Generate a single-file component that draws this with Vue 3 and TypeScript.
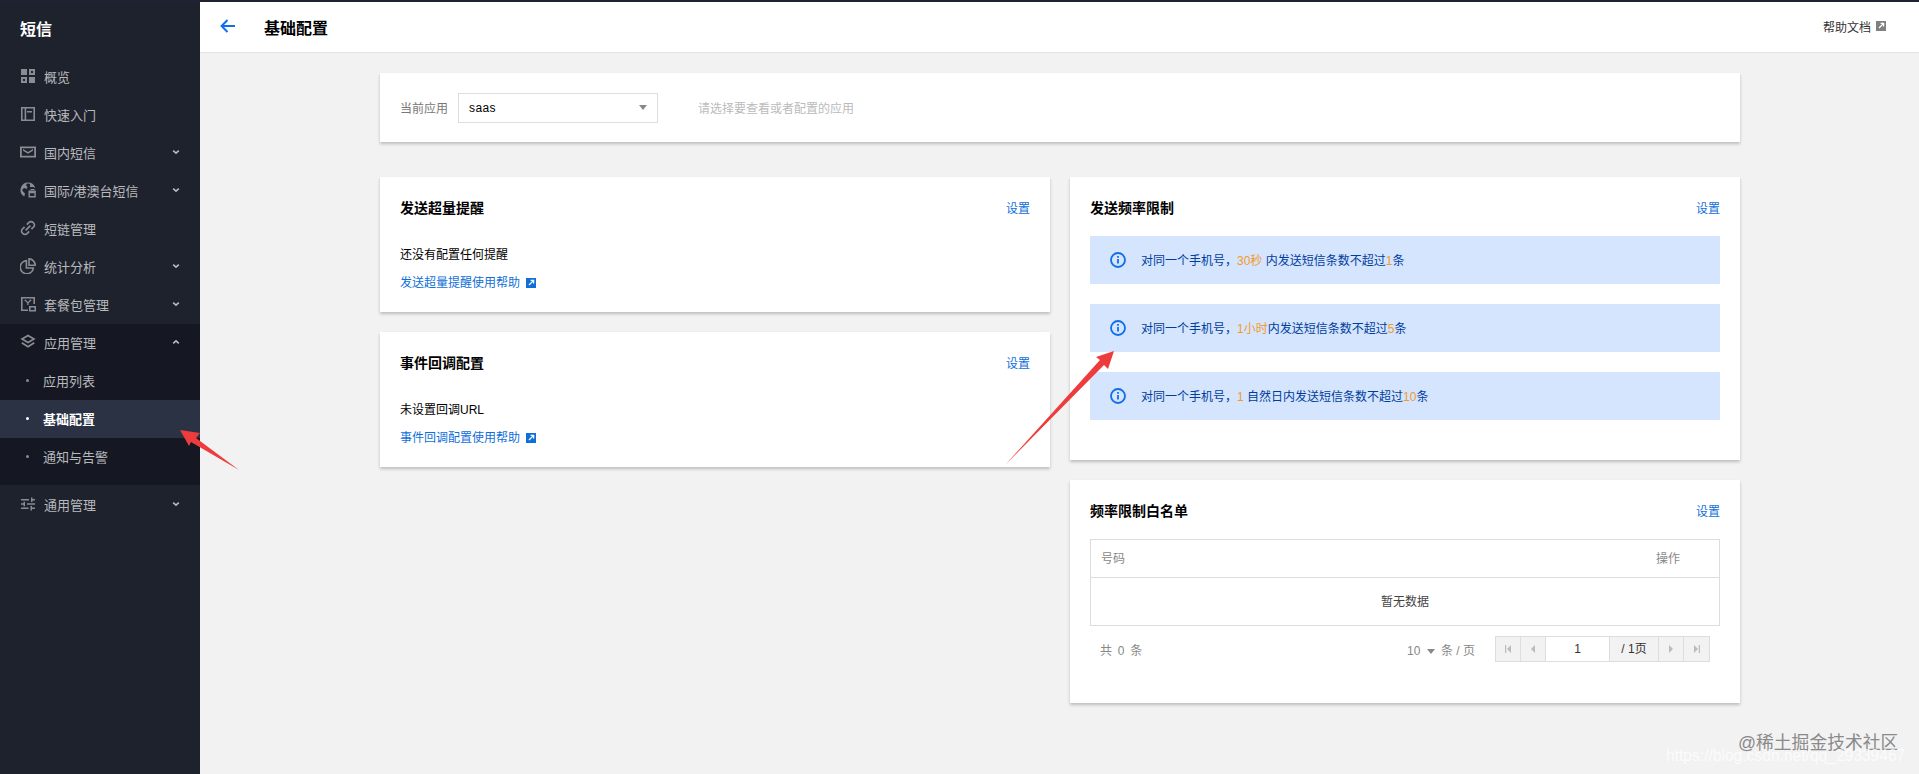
<template>
  <div class="page">
    <div class="layout">
      <aside class="sidebar">
        <div class="brand">短信</div>
        <template v-for="group in menu" :key="group.label">
          <div class="group" :class="{ open: group.children }">
            <div class="item">
              <svg class="icon" viewBox="0 0 16 16" v-html="icons[group.icon]"></svg>
              <span>{{ group.label }}</span>
              <svg v-if="group.arrow" class="chevron" viewBox="0 0 8 8" :class="{ up: group.children }">
                <path d="M1.2 2.6 4 5.2l2.8-2.6" />
              </svg>
            </div>
            <div
              v-for="child in group.children"
              :key="child"
              class="sub"
              :class="{ active: child === '基础配置' }"
            >
              <i class="dot"></i>{{ child }}
            </div>
          </div>
        </template>
      </aside>

      <div class="right">
        <header class="topbar">
          <svg class="back" viewBox="0 0 16 14">
            <path d="M7.5 1 1.6 7l5.9 6M2 7h13" />
          </svg>
          <h1>基础配置</h1>
          <a class="help">帮助文档
            <svg class="ext" viewBox="0 0 10 10"><rect width="10" height="10" /><path d="M3 7 7.4 2.6M4.6 2.4h3v3" /></svg>
          </a>
        </header>

        <main class="content">
          <section class="card app-card">
            <span class="app-label">当前应用</span>
            <div class="select">
              <span>saas</span>
              <i class="caret"></i>
            </div>
            <span class="app-hint">请选择要查看或者配置的应用</span>
          </section>

          <div class="columns">
            <div class="column">
              <section v-for="c in infoCards" :key="c.title" class="card panel info">
                <div class="panel-head">
                  <h2>{{ c.title }}</h2>
                  <a class="link">设置</a>
                </div>
                <p class="info-text">{{ c.text }}</p>
                <a class="link help-link">{{ c.link }}
                  <svg class="ext" viewBox="0 0 10 10"><rect width="10" height="10" /><path d="M3 7 7.4 2.6M4.6 2.4h3v3" /></svg>
                </a>
              </section>
            </div>

            <div class="column">
              <section class="card panel rate">
                <div class="panel-head">
                  <h2>发送频率限制</h2>
                  <a class="link">设置</a>
                </div>
                <div v-for="(r, i) in rates" :key="i" class="alert">
                  <svg class="alert-icon" viewBox="0 0 16 16">
                    <circle cx="8" cy="8" r="7" />
                    <path d="M8 7v4.6M8 4v1.8" />
                  </svg>
                  <span>对同一个手机号，<b>{{ r.period }}</b>{{ r.middle }}<b>{{ r.limit }}</b>条</span>
                </div>
              </section>

              <section class="card panel white">
                <div class="panel-head">
                  <h2>频率限制白名单</h2>
                  <a class="link">设置</a>
                </div>
                <div class="table">
                  <div class="table-head">
                    <span>号码</span>
                    <span class="op">操作</span>
                  </div>
                  <div class="table-empty">暂无数据</div>
                </div>
                <div class="pager">
                  <span class="total">共 0 条</span>
                  <span class="size">10 <i class="caret"></i> 条 / 页</span>
                  <div class="pages">
                    <button><svg viewBox="0 0 8 10"><path d="M1 1h1.2v8H1zM7 1v8L3 5z" /></svg></button>
                    <button><svg viewBox="0 0 8 10"><path d="M6 1v8L2 5z" /></svg></button>
                    <div class="page-input">1</div>
                    <div class="page-count">/ 1页</div>
                    <button><svg viewBox="0 0 8 10"><path d="M2 1v8l4-4z" /></svg></button>
                    <button><svg viewBox="0 0 8 10"><path d="M7 1H5.8v8H7zM1 1v8l4-4z" /></svg></button>
                  </div>
                </div>
              </section>
            </div>
          </div>
        </main>
      </div>
    </div>

    <!-- annotations on top of the screenshot -->
    <svg class="marks" viewBox="0 0 1919 774">
      <path d="M180 430 200 433 196 438 239 470 191 442 189 446z" />
      <path d="M1114 351 1108 369 1104 365 1006 464 1100 360 1096 357z" />
    </svg>
    <div class="watermark">@稀土掘金技术社区</div>
    <div class="watermark-url">https://blog.csdn.net/qq_29339467</div>
  </div>
</template>

<script setup lang="ts">
interface MenuGroup {
  label: string;
  icon: string;
  arrow?: boolean;
  children?: string[];
}

const menu: MenuGroup[] = [
  { label: '概览', icon: 'overview' },
  { label: '快速入门', icon: 'start' },
  { label: '国内短信', icon: 'mail', arrow: true },
  { label: '国际/港澳台短信', icon: 'globe', arrow: true },
  { label: '短链管理', icon: 'chain' },
  { label: '统计分析', icon: 'pie', arrow: true },
  { label: '套餐包管理', icon: 'pack', arrow: true },
  { label: '应用管理', icon: 'layers', arrow: true, children: ['应用列表', '基础配置', '通知与告警'] },
  { label: '通用管理', icon: 'sliders', arrow: true },
];

const icons: Record<string, string> = {
  overview:
    '<path fill="currentColor" fill-rule="evenodd" d="M1 1h6v6H1zM9 1h6v6H9zm2 2v2h2V3zM1 9h6v6H1zm2 2v2h2v-2zM9 9h6v6H9z"/>',
  start:
    '<path fill="currentColor" fill-rule="evenodd" d="M1 1h14v14H1zm1.6 1.6v10.8h2V2.6zm3.6 0v10.8h7.2V2.6zM7 5h5v1.5H7z"/>',
  mail:
    '<path fill="currentColor" fill-rule="evenodd" d="M0 2.5h16v11H0zM1.8 4.2v7.6h12.4V4.2zM3 5l5 3 5-3v1.7L8 9.8 3 6.7z"/>',
  globe:
    '<path fill="currentColor" d="M8 .5a7.5 7.5 0 0 0-3.7 14l.7-3-2.5-2.5V7l2-1 2 1 1-1.5L6 3l1-1.4 3 .2V5h3.5l1.8 1.2A7.5 7.5 0 0 0 8 .5z"/><path fill="currentColor" fill-rule="evenodd" d="M8.5 8.5h7.3v7H8.5zm1.4 2.8v2.8h4.5v-2.8zM10.5 7h4v1h-4z"/>',
  chain:
    '<path fill="none" stroke="currentColor" stroke-width="1.7" d="M6.8 4.6 9 2.4a2.8 2.8 0 0 1 4 0l.6.6a2.8 2.8 0 0 1 0 4L11.4 9.2M9.2 11.4 7 13.6a2.8 2.8 0 0 1-4 0l-.6-.6a2.8 2.8 0 0 1 0-4l2.2-2.2M5.6 10.4l4.8-4.8"/>',
  pie:
    '<path fill="none" stroke="currentColor" stroke-width="1.6" d="M6.4 2.6a6.6 6.6 0 1 0 7 7.4H6.4z"/><path fill="none" stroke="currentColor" stroke-width="1.6" d="M9 .9a6.5 6.5 0 0 1 6.2 6.4H9z"/>',
  pack:
    '<path fill="currentColor" fill-rule="evenodd" d="M1 1h14v7h-1.6V2.6H2.6v10.8H8V15H1zM4.2 4.2l1-.9 2.7 2.6 2.7-2.6 1 .9-3 2.9V9H7.2V7zM9 10h7v5.5H9zm1.6 1.6v2.3h3.8v-2.3z"/>',
  layers:
    '<path fill="none" stroke="currentColor" stroke-width="1.7" d="M8 1.4 14 5 8 8.6 2 5z"/><path fill="none" stroke="currentColor" stroke-width="1.7" d="m1.8 8.8 6.2 4 6.2-4"/>',
  sliders:
    '<path fill="currentColor" d="M1 3h8v1.5H1zM11 1.5h1.5V3H15v1.5h-2.5V6H11zM1 7.3h2.5V5.8H5v4.4H3.5V8.8H1zM7 7.3h8v1.5H7zM1 11.6h7.5v1.5H1zM10.5 10H12v1.6h3v1.5h-3v1.5h-1.5z"/>',
};

const infoCards = [
  { title: '发送超量提醒', text: '还没有配置任何提醒', link: '发送超量提醒使用帮助' },
  { title: '事件回调配置', text: '未设置回调URL', link: '事件回调配置使用帮助' },
];

const rates = [
  { period: '30秒', middle: ' 内发送短信条数不超过', limit: '1' },
  { period: '1小时', middle: '内发送短信条数不超过', limit: '5' },
  { period: '1 ', middle: '自然日内发送短信条数不超过', limit: '10' },
];
</script>

<style>
html,
body {
  margin: 0;
  background: #f2f2f2;
}
</style>

<style scoped>
.page {
  position: relative;
  height: 774px;
  overflow: hidden;
  border-top: 2px solid #1f2233;
  box-sizing: border-box;
  font-family: "Liberation Sans", "Noto Sans CJK SC", sans-serif;
  font-size: 12px;
  color: #000;
}

.layout {
  display: flex;
  height: 100%;
}

.sidebar {
  width: 200px;
  flex: none;
  background: #1e222d;
  color: #b8babe;
  font-size: 13px;
}

.brand {
  height: 56px;
  padding-left: 20px;
  line-height: 55px;
  font-size: 16px;
  font-weight: 700;
  color: #fff;
}

.item,
.sub {
  display: flex;
  align-items: center;
  height: 38px;
  box-sizing: border-box;
  padding-bottom: 2px;
}

.item {
  padding-left: 20px;
  position: relative;
}

.icon {
  width: 16px;
  height: 16px;
  margin-right: 8px;
  color: #898c93;
}

.chevron {
  position: absolute;
  left: 172px;
  top: 14px;
  width: 8px;
  height: 8px;
  fill: none;
  stroke: #b8babe;
  stroke-width: 1.6;
}

.chevron.up {
  transform: rotate(180deg);
}

.group.open {
  background: #151822;
  padding-bottom: 9px;
  margin-bottom: 1px;
}

.sub {
  padding-left: 26px;
}

.sub.active {
  background: #2a3244;
  color: #fff;
  font-weight: 700;
}

.dot {
  width: 3px;
  height: 3px;
  border-radius: 50%;
  background: currentColor;
  margin-right: 14px;
  opacity: 0.7;
}

.sub.active .dot {
  opacity: 1;
}

.right {
  flex: 1;
  min-width: 0;
  display: flex;
  flex-direction: column;
}

.topbar {
  display: flex;
  align-items: center;
  height: 50px;
  box-sizing: content-box;
  padding: 0 33px 0 20px;
  background: #fff;
  border-bottom: 1px solid #e2e2e2;
}

.back {
  width: 16px;
  height: 14px;
  fill: none;
  stroke: #0f6fe8;
  stroke-width: 2;
  margin: 0 28px 2px 0;
}

.topbar h1 {
  margin: 0;
  font-size: 16px;
  font-weight: 700;
}

.help {
  margin-left: auto;
  padding-bottom: 2px;
  display: flex;
  align-items: center;
  color: #333;
}

.ext {
  width: 10px;
  height: 10px;
  margin-left: 6px;
  fill: currentColor;
  stroke: none;
}

.ext path {
  fill: none;
  stroke: #fff;
  stroke-width: 1.3;
}

.help .ext {
  margin-left: 5px;
  color: #808080;
}

.content {
  padding: 20px 179px 0 180px;
}

.card {
  background: #fff;
  box-shadow: 0 2px 3px rgba(0, 0, 0, 0.22);
  box-sizing: border-box;
}

.app-card {
  display: flex;
  align-items: center;
  height: 69px;
  padding: 0 20px;
  margin-bottom: 35px;
}

.app-label {
  color: #777;
  margin-right: 10px;
}

.select {
  display: flex;
  align-items: center;
  justify-content: space-between;
  box-sizing: border-box;
  width: 200px;
  height: 30px;
  padding: 0 10px;
  border: 1px solid #ddd;
  letter-spacing: 0.4px;
}

.caret {
  display: inline-block;
  border-style: solid;
  border-width: 5px 4px 0;
  border-color: #888 transparent transparent;
}

.app-hint {
  margin-left: 40px;
  color: #bbb;
}

.columns {
  display: grid;
  grid-template-columns: 670px 670px;
  gap: 20px;
  align-items: start;
}

.column {
  display: flex;
  flex-direction: column;
  gap: 20px;
}

.panel {
  padding: 0 20px;
}

.panel-head {
  display: flex;
  justify-content: space-between;
  align-items: center;
  height: 20px;
  padding-top: 20px;
}

.panel-head h2 {
  margin: 0;
  font-size: 14px;
  font-weight: 700;
}

.link {
  color: #0f6fd8;
}

.info {
  height: 135px;
}

.info-text {
  margin: 28px 0 0;
  line-height: 20px;
}

.help-link {
  display: flex;
  align-items: center;
  margin-top: 8px;
  line-height: 20px;
}

.rate {
  height: 283px;
  padding-bottom: 40px;
}

.alert {
  display: flex;
  align-items: center;
  height: 48px;
  box-sizing: border-box;
  padding: 0 0 2px 20px;
  margin-top: 20px;
  background: #d4e5fd;
  color: #003c9e;
}

.panel-head + .alert {
  margin-top: 19px;
}

.alert b {
  font-weight: 400;
  color: #f39a2b;
  white-space: pre;
}

.alert span {
  white-space: pre;
}

.alert-icon {
  width: 16px;
  height: 16px;
  margin: 2px 15px 0 0;
  fill: none;
  stroke: #0f6fe8;
  stroke-width: 1.8;
}

.white {
  height: 223px;
}

.table {
  margin-top: 19px;
  border: 1px solid #ddd;
}

.table-head {
  display: flex;
  justify-content: space-between;
  align-items: center;
  height: 38px;
  box-sizing: border-box;
  padding: 0 0 2px 10px;
  border-bottom: 1px solid #ddd;
  color: #888;
}

.op {
  width: 63px;
}

.table-empty {
  height: 47px;
  line-height: 49px;
  text-align: center;
  color: #444;
}

.pager {
  display: flex;
  align-items: center;
  height: 26px;
  margin-top: 10px;
  padding: 0 10px;
  color: #888;
}

.total {
  margin-right: auto;
  word-spacing: 2.5px;
}

.size .caret {
  margin: 0 3px 1px;
}

.pages {
  display: flex;
  height: 26px;
  margin-left: 20px;
  box-sizing: border-box;
  border: 1px solid #ddd;
  background: #f2f2f2;
  color: #333;
  line-height: 24px;
}

.pages button {
  display: flex;
  align-items: center;
  justify-content: center;
  width: 25px;
  padding: 0;
  border: 0;
  border-right: 1px solid #ddd;
  background: none;
}

.pages button:last-child {
  border-right: 0;
}

.pages button svg {
  width: 8px;
  height: 10px;
  fill: #bbb;
}

.page-input {
  width: 63px;
  background: #fff;
  text-align: center;
  border-right: 1px solid #ddd;
}

.page-count {
  width: 48px;
  text-align: center;
  border-right: 1px solid #ddd;
}

.marks {
  position: absolute;
  left: 0;
  top: -2px;
  width: 1919px;
  height: 774px;
  fill: #ee3c3c;
  pointer-events: none;
}

.watermark {
  position: absolute;
  left: 1738px;
  top: 731px;
  font-size: 17.8px;
  line-height: 20px;
  color: #8a8a8a;
  white-space: nowrap;
}

.watermark-url {
  position: absolute;
  left: 1666px;
  top: 747px;
  font-size: 15.6px;
  line-height: 14px;
  color: #fff;
  opacity: 0.75;
  white-space: nowrap;
}
</style>
